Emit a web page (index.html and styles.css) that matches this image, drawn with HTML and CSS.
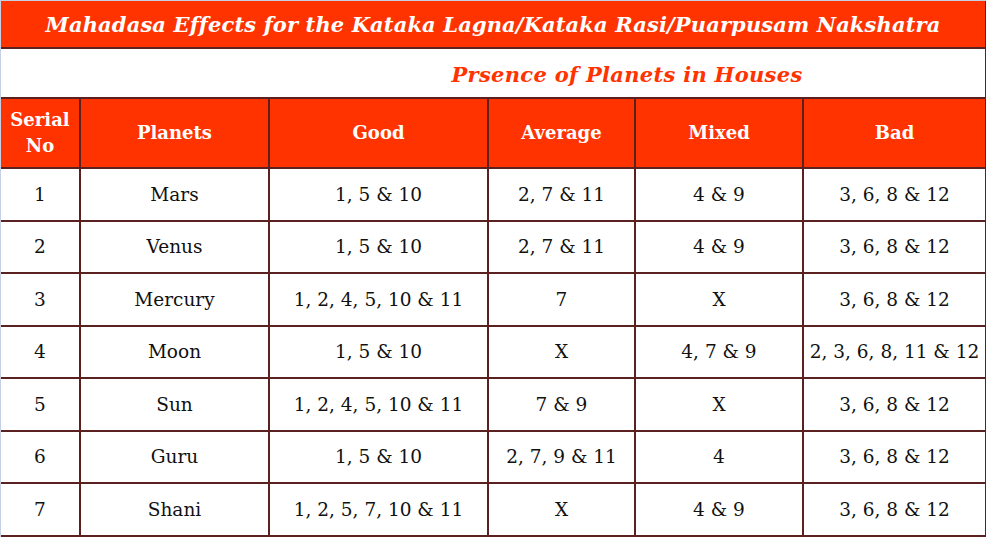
FILE: index.html
```html
<!DOCTYPE html>
<html>
<head>
<meta charset="utf-8">
<link rel="stylesheet" href="styles.css">
</head>
<body>
<div class="frame">
<table class="dasa">
  <colgroup>
    <col class="c1"><col class="c2"><col class="c3"><col class="c4"><col class="c5"><col class="c6">
  </colgroup>
  <tr class="title-row"><td colspan="6" class="title">Mahadasa Effects for the Kataka Lagna/Kataka Rasi/Puarpusam Nakshatra</td></tr>
  <tr class="sub-row"><td colspan="2" class="blank"></td><td colspan="4" class="subtitle">Prsence of Planets in Houses</td></tr>
  <tr class="head-row">
    <th>Serial No</th><th>Planets</th><th>Good</th><th>Average</th><th>Mixed</th><th>Bad</th>
  </tr>
  <tr><td>1</td><td>Mars</td><td>1, 5 &amp; 10</td><td>2, 7 &amp; 11</td><td>4 &amp; 9</td><td>3, 6, 8 &amp; 12</td></tr>
  <tr><td>2</td><td>Venus</td><td>1, 5 &amp; 10</td><td>2, 7 &amp; 11</td><td>4 &amp; 9</td><td>3, 6, 8 &amp; 12</td></tr>
  <tr><td>3</td><td>Mercury</td><td>1, 2, 4, 5, 10 &amp; 11</td><td>7</td><td>X</td><td>3, 6, 8 &amp; 12</td></tr>
  <tr><td>4</td><td>Moon</td><td>1, 5 &amp; 10</td><td>X</td><td>4, 7 &amp; 9</td><td>2, 3, 6, 8, 11 &amp; 12</td></tr>
  <tr><td>5</td><td>Sun</td><td>1, 2, 4, 5, 10 &amp; 11</td><td>7 &amp; 9</td><td>X</td><td>3, 6, 8 &amp; 12</td></tr>
  <tr><td>6</td><td>Guru</td><td>1, 5 &amp; 10</td><td>2, 7, 9 &amp; 11</td><td>4</td><td>3, 6, 8 &amp; 12</td></tr>
  <tr><td>7</td><td>Shani</td><td>1, 2, 5, 7, 10 &amp; 11</td><td>X</td><td>4 &amp; 9</td><td>3, 6, 8 &amp; 12</td></tr>
</table>
</div>
</body>
</html>
```

FILE: styles.css
```css
html, body {
  margin: 0;
  padding: 0;
  background: #ffffff;
}
.frame {
  width: 985px;
  border-left: 1px solid #c6d0e4;
  border-top: 1px solid #c6d0e4;
}
.dasa {
  width: 985px;
  border-collapse: collapse;
  table-layout: fixed;
  font-family: "DejaVu Serif", "Liberation Serif", serif;
}
.c1 { width: 79px; }
.c2 { width: 189px; }
.c3 { width: 219px; }
.c4 { width: 147px; }
.c5 { width: 168px; }
.c6 { width: 183px; }
.dasa td, .dasa th {
  border: 2px solid #5b2020;
  text-align: center;
  vertical-align: middle;
  padding: 0 2px;
}
.dasa td {
  font-size: 18.5px;
  color: #111111;
  height: 50.5px;
}
.dasa tr > :first-child { border-left: none; }
.dasa .title-row td { border-top: none; }
.dasa .title-row td.title {
  background: #ff3300;
  color: #ffffff;
  font-weight: bold;
  font-style: italic;
  font-size: 21px;
  letter-spacing: 0.13px;
  height: 46px;
  padding: 0;
}
.dasa .sub-row td {
  border-left: none;
  border-right: none;
  height: 46px;
}
.dasa .sub-row td.subtitle {
  border-right: 2px solid #5b2020;
  color: #ff3300;
  font-weight: bold;
  font-style: italic;
  font-size: 21px;
  letter-spacing: 0.3px;
  padding-top: 2px;
}
.head-row th {
  background: #ff3300;
  color: #ffffff;
  font-weight: bold;
  font-size: 18px;
  line-height: 26px;
  height: 68px;
}
```
